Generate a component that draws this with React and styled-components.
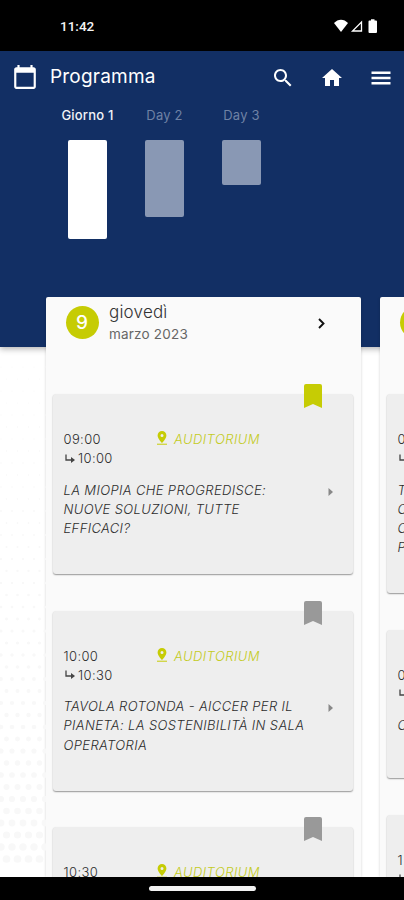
import styled, { createGlobalStyle } from 'styled-components';

const GlobalStyle = createGlobalStyle`
  * {
    box-sizing: border-box;
  }
  body {
    margin: 0;
    overflow: hidden;
    font-family: Inter, "Liberation Sans", sans-serif;
    font-weight: 300;
  }
`;

const Screen = styled.div`
  display: flex;
  flex-direction: column;
  width: 404px;
  height: 900px;
  overflow: hidden;
  background: #fff;
`;

const StatusBar = styled.div`
  flex: none;
  display: flex;
  align-items: center;
  justify-content: space-between;
  height: 51px;
  padding: 2px 26px 0 60px;
  background: #000;
  color: #f4f4f4;
  font-family: Roboto, sans-serif;
  font-size: 13.5px;
  font-weight: 500;
`;

const StatusTime = styled.span`
  margin-top: -2px;
`;

const StatusIcons = styled.div`
  display: flex;
  align-items: center;
  margin-top: -1px;
  svg {
    display: block;
    overflow: visible;
  }
`;

const Header = styled.header`
  flex: none;
  height: 296px;
  background: #122f64;
  box-shadow: 0 2px 6px rgba(0, 0, 0, 0.3);
  color: #fff;
`;

const Toolbar = styled.div`
  display: flex;
  align-items: center;
  height: 51px;
  padding: 0 11px 0 12px;
  svg {
    display: block;
    fill: currentColor;
  }
`;

const Title = styled.h1`
  flex: 1;
  margin: 0 0 0 12px;
  font-size: 19px;
  font-weight: 400;
  letter-spacing: 0.2px;
`;

const Actions = styled.div`
  display: flex;
  gap: 25px;
  padding-top: 2px;
`;

const Days = styled.div`
  display: flex;
  padding: 5px 0 0 49px;
`;

const Day = styled.div`
  display: flex;
  flex-direction: column;
  align-items: center;
  width: 77px;
  gap: 16px;
  font-size: 13px;
  line-height: 17px;
  letter-spacing: 0.2px;
  font-weight: ${({ active }) => active ? 500 : 400};
  color: ${({ active }) => active ? '#f1f3f8' : '#6f82a5'};
  white-space: nowrap;
`;

const Bar = styled.div`
  width: 39px;
  height: ${({ size }) => size}px;
  border-radius: 2px;
  background: ${({ active }) => active ? '#fff' : '#8998b4'};
`;

const Board = styled.main`
  flex: 1;
  min-height: 0;
  display: flex;
  gap: 19px;
  margin-top: -50px;
  padding-left: 46px;
  overflow: hidden;
  position: relative;
`;

const Dots = styled.svg`
  position: absolute;
  left: 0;
  top: 60px;
`;

const Column = styled.section`
  flex: none;
  width: 315px;
  padding: 0 8px 0 7px;
  border-radius: 2px 2px 0 0;
  background: #fafafa;
  box-shadow: 0 0 3px rgba(0, 0, 0, 0.18);
`;

const ColumnHead = styled.div`
  display: flex;
  align-items: center;
  height: 97px;
  padding: 0 24.5px 47px 12.5px;
`;

const DayNumber = styled.div`
  display: flex;
  align-items: center;
  justify-content: center;
  width: 33px;
  height: 33px;
  border-radius: 50%;
  background: #c6cc04;
  color: #fff;
  font-size: 19px;
  font-weight: 500;
`;

const DateText = styled.div`
  flex: 1;
  margin-left: 10.5px;
  color: #666;
  font-size: 13.5px;
  line-height: 20px;
  letter-spacing: 0.2px;
  font-weight: 400;
`;

const Weekday = styled.div`
  color: #333;
  font-size: 17px;
  line-height: 24px;
  font-weight: 300;
`;

const Card = styled.article`
  position: relative;
  height: ${({ size }) => size}px;
  margin-bottom: 36.5px;
  padding: 36px 17px 0 10.5px;
  border-radius: 3px;
  background: #eee;
  box-shadow: 0 1px 1.5px rgba(0, 0, 0, 0.4);
  color: #2c2c2c;
  font-size: 13px;
  line-height: 19.3px;
  letter-spacing: 0.37px;
`;

const Bookmark = styled.svg`
  position: absolute;
  top: -10px;
  right: 31px;
  fill: ${({ saved }) => saved ? '#c6cc04' : '#999'};
`;

const Info = styled.div`
  display: flex;
`;

const Times = styled.div`
  width: 92px;
`;

const Until = styled.div`
  display: flex;
  align-items: center;
  gap: 2.5px;
  height: 19.3px;
`;

const Room = styled.div`
  display: flex;
  gap: 6.5px;
  height: 20px;
  color: #c3cb1c;
  font-style: italic;
  letter-spacing: 0.45px;
  white-space: nowrap;
  svg {
    margin-top: 1px;
  }
`;

const Talk = styled.div`
  display: flex;
  justify-content: space-between;
  margin-top: 12px;
`;

const TalkTitle = styled.div`
  font-style: italic;
  white-space: pre;
`;

const Arrow = styled.svg`
  margin-top: 6px;
  fill: #888;
`;

const NavBar = styled.footer`
  flex: none;
  display: flex;
  justify-content: center;
  height: 23px;
  padding-top: 9px;
  background: #000;
`;

const Handle = styled.div`
  width: 107px;
  height: 5px;
  border-radius: 3px;
  background: #f2f2f2;
`;

const days = [
  { name: 'Giorno 1', size: 99, active: true },
  { name: 'Day 2', size: 77 },
  { name: 'Day 3', size: 45 },
];

const columns = [
  {
    number: 9,
    weekday: 'giovedì',
    month: 'marzo 2023',
    talks: [
      { from: '09:00', to: '10:00', room: 'AUDITORIUM', size: 180, saved: true, title: 'LA MIOPIA CHE PROGREDISCE:\nNUOVE SOLUZIONI, TUTTE\nEFFICACI?' },
      { from: '10:00', to: '10:30', room: 'AUDITORIUM', size: 180, title: 'TAVOLA ROTONDA - AICCER PER IL\nPIANETA: LA SOSTENIBILITÀ IN SALA\nOPERATORIA' },
      { from: '10:30', room: 'AUDITORIUM', size: 180 },
    ],
  },
  {
    talks: [
      { from: '0', size: 199, title: 'T\nC\nC\nP' },
      { from: '0', size: 148.5, title: 'C' },
      { from: '1', size: 180 },
    ],
  },
];

// halftone background, the dots grow towards the bottom
const dots = [];
for (let row = 0; row < 42; row++) {
  for (let col = 0; col < 5; col++) {
    dots.push({
      x: col * 11 + (row % 2) * 5.5 + 1,
      y: row * 12 + 10,
      r: 0.6 + (row / 42) ** 2 * 3.4,
    });
  }
}

const TalkCard = ({ talk }) => (
  <Card size={talk.size}>
    <Bookmark width="18" height="24" viewBox="0 0 18 24" saved={talk.saved ? 1 : 0}>
      <path d="M2 0h14a2 2 0 0 1 2 2v22l-9-4-9 4V2a2 2 0 0 1 2-2z" />
    </Bookmark>
    <Info>
      <Times>
        <div>{talk.from}</div>
        <Until>
          <svg width="12" height="14" viewBox="0 0 12 14" fill="none" stroke="#444" strokeWidth="1.3">
            <path d="M2 2.500V8h5.500" />
            <path d="M7 5v6l4-3z" fill="#444" stroke="none" />
          </svg>
          {talk.to}
        </Until>
      </Times>
      {talk.room && (
        <Room>
          <svg width="12" height="15" viewBox="0 0 12 15" fill="#c6cc04">
            <path fillRule="evenodd" d="M6 0a4.400 4.400 0 0 0-4.400 4.400C1.600 7.600 6 12 6 12s4.400-4.400 4.400-7.600A4.400 4.400 0 0 0 6 0zm0 2.900a1.500 1.500 0 1 1 0 3 1.500 1.500 0 0 1 0-3z" />
            <path d="M1 12.700h10v1H1z" />
          </svg>
          {talk.room}
        </Room>
      )}
    </Info>
    <Talk>
      <TalkTitle>{talk.title}</TalkTitle>
      <Arrow width="10" height="10" viewBox="0 0 10 10"><path d="M2.500 1l4.500 4-4.500 4z" /></Arrow>
    </Talk>
  </Card>
);

const App = () => (
  <Screen>
    <GlobalStyle />
    <StatusBar>
      <StatusTime>11:42</StatusTime>
      <StatusIcons>
        <svg width="44" height="16" viewBox="0 0 44 16" fill="#fff">
          <path d="M0 5C4 .5 10 .5 14 5L7 14z" />
          <path d="M27.500 4v9h-9z" fill="none" stroke="#fff" strokeWidth="1.3" />
          <path d="M37 1.200h3.500v1.300H42a1 1 0 0 1 1 1V14a1 1 0 0 1-1 1h-6.500a1 1 0 0 1-1-1V3.500a1 1 0 0 1 1-1H37z" />
        </svg>
      </StatusIcons>
    </StatusBar>
    <Header>
      <Toolbar>
        <svg width="26" height="26" viewBox="0 0 24 24">
          <path d="M20 3h-1V1h-2v2H7V1H5v2H4c-1.100 0-2 .9-2 2v16c0 1.100.9 2 2 2h16c1.100 0 2-.9 2-2V5c0-1.100-.9-2-2-2zm0 18H4V8h16v13z" />
        </svg>
        <Title>Programma</Title>
        <Actions>
          <svg width="24" height="24" viewBox="0 0 24 24">
            <path d="M15.500 14h-.79l-.28-.27C15.410 12.590 16 11.110 16 9.500 16 5.910 13.090 3 9.500 3S3 5.910 3 9.500 5.910 16 9.500 16c1.610 0 3.090-.59 4.230-1.570l.27.28v.79l5 4.990L20.490 19l-4.990-5zm-6 0C7.010 14 5 11.990 5 9.500S7.010 5 9.500 5 14 7.010 14 9.500 11.990 14 9.500 14z" />
          </svg>
          <svg width="24" height="24" viewBox="0 0 24 24">
            <path d="M10 20v-6h4v6h5v-8h3L12 3 2 12h3v8z" />
          </svg>
          <svg width="24" height="24" viewBox="0 0 24 24">
            <path d="M2.500 5.500h19V8h-19zM2.500 10.750h19v2.500h-19zM2.500 16h19v2.500h-19z" />
          </svg>
        </Actions>
      </Toolbar>
      <Days>
        {days.map((day) => (
          <Day key={day.name} active={day.active ? 1 : 0}>
            {day.name}
            <Bar size={day.size} active={day.active ? 1 : 0} />
          </Day>
        ))}
      </Days>
    </Header>
    <Board>
      <Dots width="46" height="520" fill="#f8f8f8">
        {dots.map((dot, i) => <circle key={i} cx={dot.x} cy={dot.y} r={dot.r} />)}
      </Dots>
      {columns.map((column, i) => (
        <Column key={i}>
          <ColumnHead>
            <DayNumber>{column.number}</DayNumber>
            <DateText>
              <Weekday>{column.weekday}</Weekday>
              {column.month}
            </DateText>
            <svg width="15" height="15" viewBox="0 0 15 15" fill="none" stroke="#111" strokeWidth="1.900">
              <path d="M5 4l4.500 4.500L5 13" />
            </svg>
          </ColumnHead>
          {column.talks.map((talk, j) => <TalkCard key={j} talk={talk} />)}
        </Column>
      ))}
    </Board>
    <NavBar><Handle /></NavBar>
  </Screen>
);

export default App;
